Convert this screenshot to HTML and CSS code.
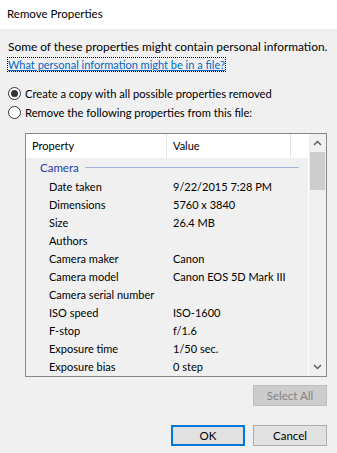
FILE: index.html
```html
<!DOCTYPE html>
<html lang="en">
<head>
  <meta charset="UTF-8">
  <title>Remove Properties</title>
  <link rel="stylesheet" href="styles.css">
</head>
<body>

  <div class="titlebar">Remove Properties</div>

  <div class="content">
    <p class="intro">Some of these properties might contain personal information.</p>
    <p class="help"><a href="#">What personal information might be in a file?</a></p>

    <label class="radio"><span class="dot checked"></span>Create a copy with all possible properties removed</label>
    <label class="radio"><span class="dot"></span>Remove the following properties from this file:</label>

    <div class="listbox">
      <div class="list">
        <div class="header">
          <div class="col col-prop">Property</div>
          <div class="col col-val">Value</div>
          <div class="col col-rest"></div>
        </div>
        <div class="group"><span>Camera</span><span class="rule"></span></div>
        <div class="rows">
          <div class="row"><span>Date taken</span><span>9/22/2015 7:28 PM</span></div>
          <div class="row"><span>Dimensions</span><span>5760 x 3840</span></div>
          <div class="row"><span>Size</span><span>26.4 MB</span></div>
          <div class="row"><span>Authors</span><span></span></div>
          <div class="row"><span>Camera maker</span><span>Canon</span></div>
          <div class="row"><span>Camera model</span><span>Canon EOS 5D Mark III</span></div>
          <div class="row"><span>Camera serial number</span><span></span></div>
          <div class="row"><span>ISO speed</span><span>ISO-1600</span></div>
          <div class="row"><span>F-stop</span><span>f/1.6</span></div>
          <div class="row"><span>Exposure time</span><span>1/50 sec.</span></div>
          <div class="row"><span>Exposure bias</span><span>0 step</span></div>
        </div>
      </div>
      <div class="scrollbar">
        <svg class="arrow" width="9" height="6" viewBox="0 0 9 6"><path d="M1 5 L4.5 1.5 L8 5" fill="none" stroke="#606060" stroke-width="1.5"/></svg>
        <div class="thumb"></div>
        <div class="track"></div>
        <svg class="arrow" width="9" height="6" viewBox="0 0 9 6"><path d="M1 1 L4.5 4.5 L8 1" fill="none" stroke="#606060" stroke-width="1.5"/></svg>
      </div>
    </div>

    <div class="actions">
      <button class="btn" disabled>Select All</button>
    </div>

    <div class="footer">
      <button class="btn default">OK</button>
      <button class="btn">Cancel</button>
    </div>
  </div>

</body>
</html>
```

FILE: styles.css
```css
body {
  margin: 0;
  background-color: #f0f0f0;
  font-family: Lato, sans-serif;
  font-size: 11px;
  color: #000;
  width: 337px;
  height: 453px;
  overflow: hidden;
  white-space: nowrap;
}

.titlebar {
  background: #fff;
  height: 29px;
  line-height: 28px;
  padding-left: 7px;
  font-size: 11.5px;
}

.content {
  padding: 9px 0 0 8px;
}

.intro, .help {
  margin: 0;
  line-height: 18px;
}

.intro {
  font-size: 11.9px;
}

.help a {
  color: #0066cc;
  outline: 1px dotted #000;
  text-decoration: underline;
}

.radio {
  display: flex;
  align-items: center;
  height: 19px;
  font-size: 11.2px;
}

.radio:first-of-type {
  margin-top: 10px;
}

.dot {
  width: 11px;
  height: 11px;
  border: 1px solid #333;
  border-radius: 50%;
  background: #fff;
  margin-right: 4px;
  position: relative;
}

.dot.checked::after {
  content: "";
  position: absolute;
  left: 2px;
  top: 2px;
  width: 7px;
  height: 7px;
  border-radius: 50%;
  background: #333;
}

.listbox {
  margin: 11px 0 0 17px;
  width: 300px;
  height: 242px;
  border: 1px solid #828790;
  display: flex;
}

.list {
  flex: 1;
  min-width: 0;
  border-right: 1px solid #fff;
  overflow: hidden;
}

.header {
  display: flex;
  background: #fff;
  height: 24px;
  line-height: 24px;
}

.col {
  border-right: 1px solid #e5e5e5;
  padding-left: 6px;
  box-sizing: border-box;
}

.col-prop { width: 141px; }
.col-val { width: 124px; }
.col-rest { flex: 1; border-right: none; }

.group {
  display: flex;
  align-items: center;
  height: 19px;
  padding: 0 9px 1px 14px;
  color: #1e3da8;
  font-size: 11.5px;
}

.rule {
  flex: 1;
  height: 1px;
  background: #a3b3dc;
  margin-left: 6px;
}

.row {
  display: grid;
  grid-template-columns: 124px 1fr;
  height: 18px;
  line-height: 18px;
  padding-left: 23px;
}

.scrollbar {
  width: 17px;
  display: flex;
  flex-direction: column;
  align-items: center;
}

.arrow {
  margin: 6px 0;
}

.thumb {
  width: 15px;
  height: 38px;
  background: #cdcdcd;
}

.track {
  flex: 1;
}

.actions {
  display: flex;
  justify-content: flex-end;
  width: 319px;
  margin-top: 8px;
}

.footer {
  display: flex;
  justify-content: flex-end;
  gap: 8px;
  width: 319px;
  margin-top: 19px;
}

.btn {
  width: 74px;
  height: 21px;
  font-family: Lato, sans-serif;
  font-size: 11.5px;
  background: #e1e1e1;
  border: 1px solid #adadad;
  padding: 0;
  color: #000;
}

.btn:disabled {
  background: #cccccc;
  border-color: #bfbfbf;
  color: #838383;
}

.btn.default {
  border: 2px solid #0078d7;
}
```
